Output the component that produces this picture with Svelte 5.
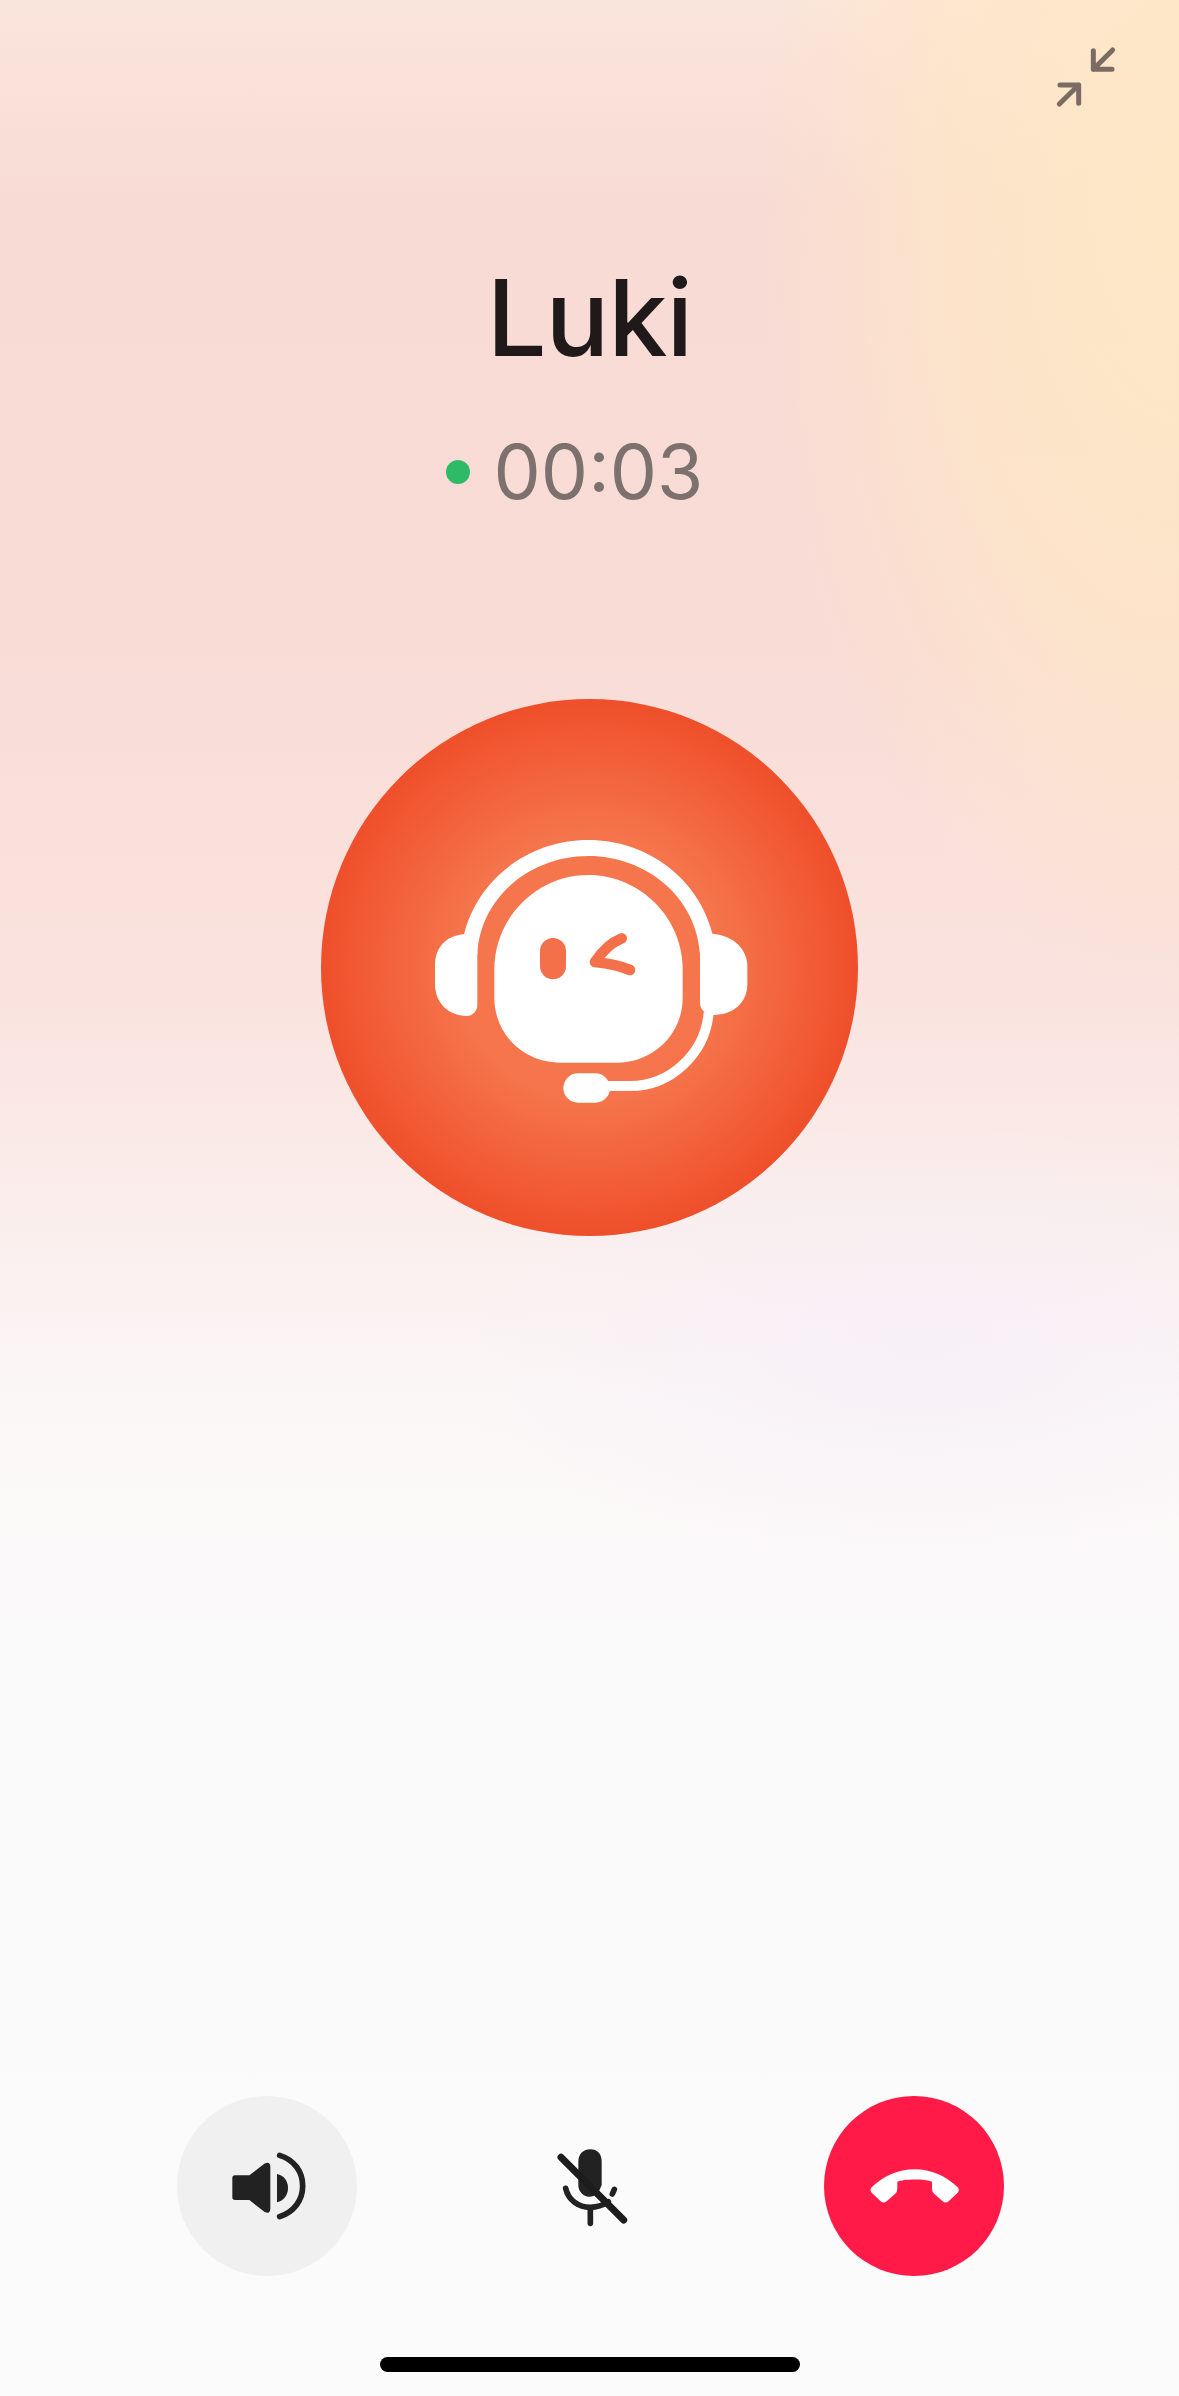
<script>
  const name = 'Luki';
  const elapsed = '00:03';
</script>

<div class="screen">
  <div class="topbar">
    <svg class="shrink" viewBox="0 0 360 270" aria-label="minimize">
      <path d="M190 62V118H246M190 118L248 60M90 165H146V220M146 165L88 222" />
    </svg>
  </div>

  <h1>{name}</h1>
  <div class="status">
    <span class="dot"></span>
    <span class="time">{elapsed}</span>
  </div>

  <div class="avatar">
    <svg viewBox="0 0 1140 1020" class="bot">
      <path class="w" d="M192 400C235 230 390 117 565 117C740 117 895 230 938 400L900 460C890 290 740 165 565 165C390 165 240 290 232 460Z" />
      <path class="w" d="M192 400C140 403 105 440 105 490V550C105 605 145 645 200 645C218 645 232 630 232 612V440Z" />
      <path class="w" d="M938 398C1000 403 1042 445 1042 495V550C1042 605 1000 642 940 642L925 640C910 635 900 620 900 605V440Z" />
      <path class="w" d="M283 505C283 350 410 222 565 222C720 222 848 350 848 505V590C848 700 760 785 650 785H480C370 785 283 700 283 590Z" />
      <rect class="o" x="420" y="411" width="78" height="124" rx="39" />
      <path class="wink" d="M665 412Q620 430 585 483Q650 490 690 507" />
      <path class="arm" d="M926 635C915 760 810 855 690 855H620" />
      <rect class="w" x="490" y="817" width="140" height="88" rx="44" />
    </svg>
  </div>

  <div class="controls">
    <button class="round speaker" aria-label="speaker">
      <svg viewBox="0 0 540 540">
        <g transform="translate(-78 -78)">
          <path class="k" d="M252 316H295L340 281Q358 272 358 292V415Q358 435 340 425L295 390H252Q244 390 244 382V324Q244 316 252 316Z" />
          <path class="k" d="M378 312C398 316 411 332 411 354C411 376 398 392 378 397Z" />
          <path class="ks" d="M386 256C430 270 455 305 455 348C455 390 430 425 386 440" />
        </g>
      </svg>
    </button>
    <button class="round mute" aria-label="mute">
      <svg viewBox="0 0 540 540">
        <g transform="translate(-1048 -78)">
          <path class="k" d="M1280 275C1280 252 1295 238 1316 238C1337 238 1350 252 1350 275V345L1340 368C1330 378 1322 380 1312 380C1295 380 1280 365 1280 345Z" />
          <path class="ks" d="M1242 355C1250 390 1280 412 1316 412C1338 412 1355 405 1370 395M1316 412V460M1388 358L1382 372" />
          <path class="slash" d="M1228 262L1416 450" />
        </g>
      </svg>
    </button>
    <button class="round hang" aria-label="hang up">
      <svg viewBox="0 0 540 540">
        <g transform="translate(-72 -78)">
          <path d="M215 352C250 318 295 298 344 298C393 298 438 318 473 352Q480 360 473 368L446 394Q437 401 428 394L403 372Q396 366 396 356V335C378 326 310 326 292 335V356Q292 366 285 372L260 394Q251 401 242 394L215 368Q208 360 215 352Z" fill="#fff" />
        </g>
      </svg>
    </button>
  </div>

  <div class="home"></div>
</div>

<style>
  :global(body) { margin: 0; }
  .screen {
    position: relative;
    width: 1179px;
    height: 2396px;
    overflow: hidden;
    display: flex;
    flex-direction: column;
    align-items: center;
    font-family: Inter, "Liberation Sans", sans-serif;
    background:
      radial-gradient(ellipse 420px 800px at 1179px 200px, #fee7c6 0%, rgba(254, 231, 198, 0.7) 55%, rgba(254, 231, 198, 0) 100%),
      radial-gradient(ellipse 480px 220px at 920px 1340px, rgba(246, 238, 248, 0.75) 0%, rgba(246, 238, 248, 0) 100%),
      linear-gradient(180deg, #fae5dc 0px, #f8dbd5 200px, #f9dcd6 650px, #fae3df 1000px, #faedeb 1200px, #fbf7f7 1400px, #fbfafa 1650px, #fbfbfb 2396px);
  }
  .topbar {
    align-self: stretch;
    display: flex;
    justify-content: flex-end;
    padding: 30px 29px 0 0;
    height: 90px;
  }
  .shrink { width: 120px; height: 90px; }
  .shrink path { fill: none; stroke: #7b6b63; stroke-width: 15; stroke-linecap: round; stroke-linejoin: round; }
  h1 {
    margin: 134px 0 0;
    font-size: 106px;
    line-height: 128px;
    font-weight: 500;
    color: #1f1a19;
    letter-spacing: -1px;
  }
  .status {
    display: flex;
    align-items: center;
    gap: 24px;
    margin-top: 44px;
    height: 92px;
    padding-right: 30px;
  }
  .dot { width: 24px; height: 24px; border-radius: 50%; background: #2fba67; }
  .time { font-size: 75px; line-height: 92px; font-weight: 400; color: #7c716d; }
  .avatar {
    width: 537px;
    height: 537px;
    margin-top: 181px;
    border-radius: 50%;
    background: radial-gradient(circle closest-side at 50% 50%, #f67a50 0%, #f5744b 50%, #ef4f2b 100%);
    display: flex;
    align-items: center;
    justify-content: center;
  }
  .bot { width: 380px; height: 340px; margin-top: 6px; }
  .w { fill: #fff; }
  .o { fill: #f4704a; }
  .wink { fill: none; stroke: #f4704a; stroke-width: 32; stroke-linecap: round; stroke-linejoin: round; }
  .arm { fill: none; stroke: #fff; stroke-width: 30; }
  .controls {
    position: absolute;
    left: 177px;
    right: 175px;
    top: 2096px;
    display: flex;
    justify-content: space-between;
  }
  .round {
    width: 180px;
    height: 180px;
    padding: 0;
    border: 0;
    border-radius: 50%;
    background: transparent;
    display: flex;
  }
  .round svg { width: 180px; height: 180px; }
  .speaker { background: #f0f0f0; }
  .hang { background: #ff1a47; }
  .k { fill: #222; }
  .ks { fill: none; stroke: #222; stroke-width: 17; stroke-linecap: round; }
  .slash { fill: none; stroke: #1c1c1c; stroke-width: 21; stroke-linecap: round; }
  .home {
    position: absolute;
    left: 380px;
    bottom: 24px;
    width: 420px;
    height: 15px;
    border-radius: 8px;
    background: #000;
  }
</style>
